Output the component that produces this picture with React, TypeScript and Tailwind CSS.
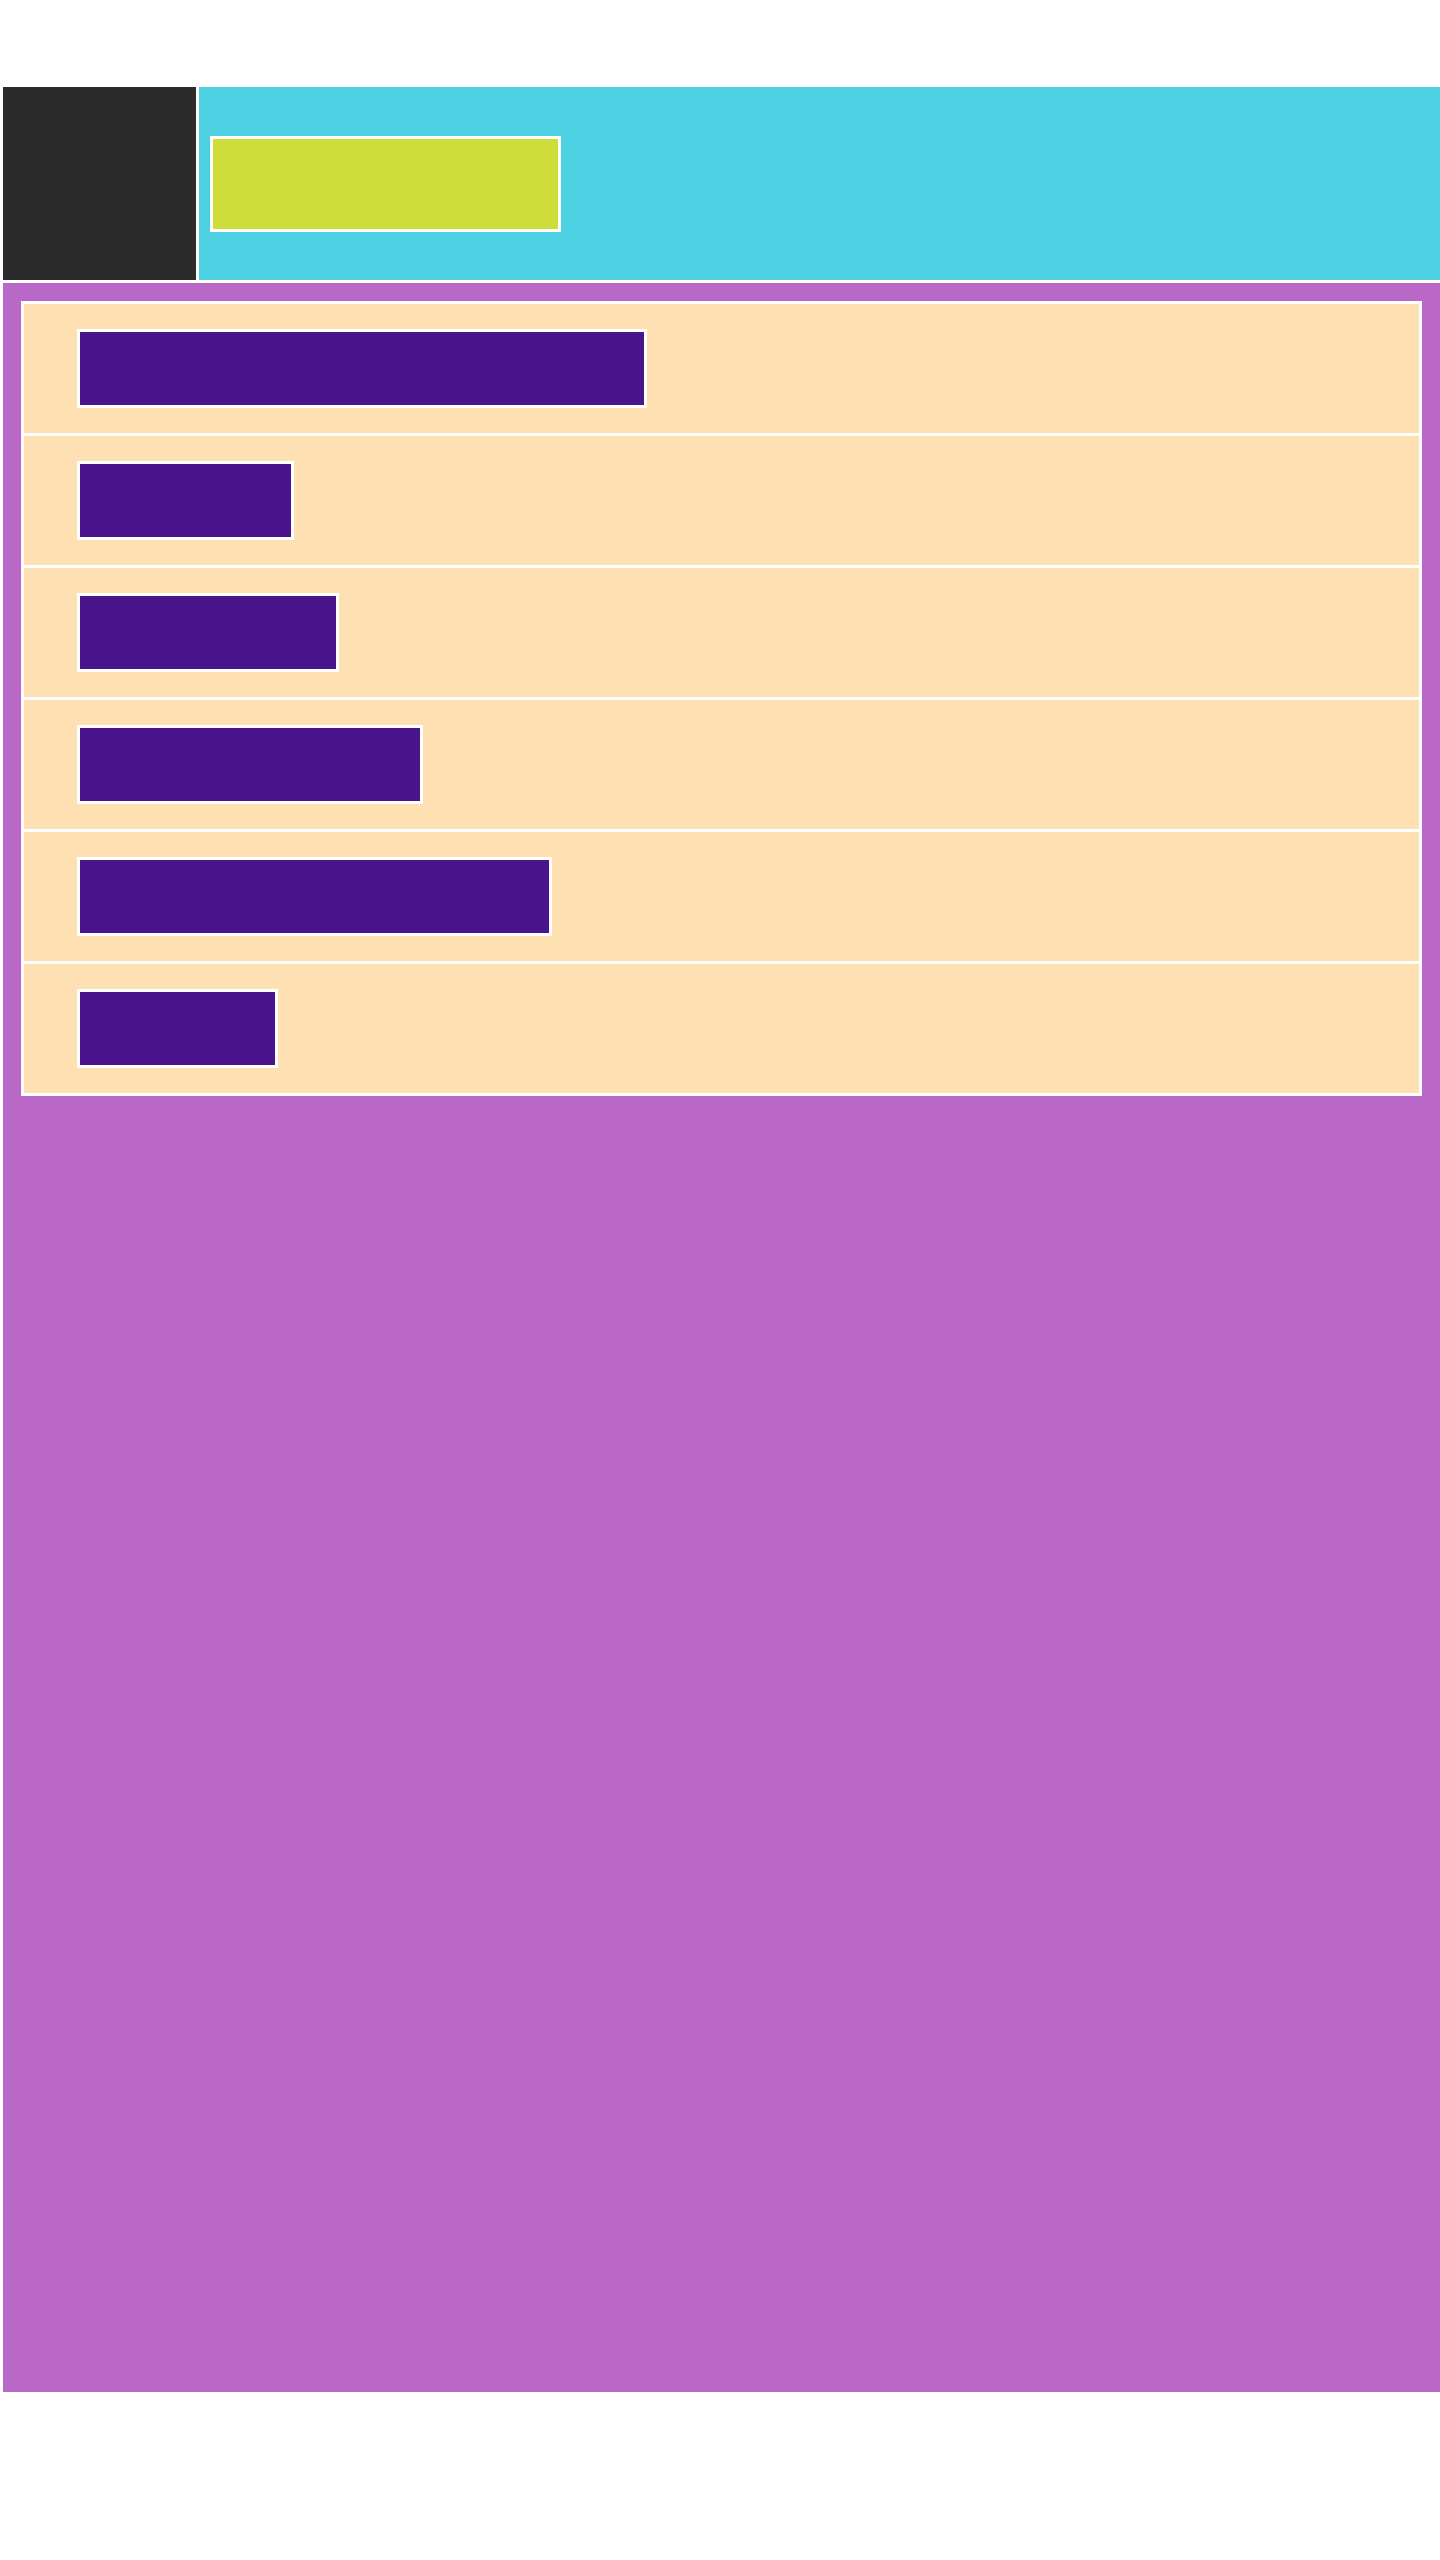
const bars = [570, 217, 262, 346, 475, 201];

function Header() {
  return (
    <header className="flex h-[193px] gap-[3px]">
      {/* Logo block */}
      <div className="w-[193px] shrink-0 bg-[#2b2b2b]" />
      {/* Title bar */}
      <div className="flex flex-1 items-center bg-[#4dd0e1] pl-[11px]">
        <div className="h-[96px] w-[351px] border-[3px] border-white bg-[#cfdd3b]" />
      </div>
    </header>
  );
}

function ListRow({ width }: { width: number }) {
  return (
    <div className="bg-[#ffe0b2] py-[25px] pl-[53px]">
      <div
        className="h-[79px] border-[3px] border-white bg-[#4a148c]"
        style={{ width }}
      />
    </div>
  );
}

export default function App() {
  return (
    <div className="min-h-[2560px] bg-white pl-[3px] pt-[87px]">
      <Header />
      <main className="mt-[3px] h-[2109px] bg-[#ba68c8] p-[18px]">
        <div className="divide-y-[3px] divide-white border-[3px] border-white">
          {bars.map((w, i) => (
            <ListRow key={i} width={w} />
          ))}
        </div>
      </main>
    </div>
  );
}
